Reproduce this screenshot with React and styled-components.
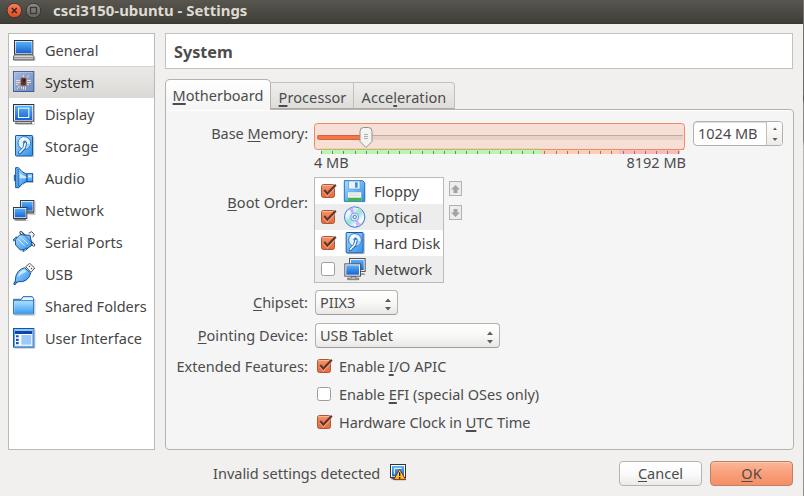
import React from 'react';
import styled, { createGlobalStyle, css } from 'styled-components';

const Global = createGlobalStyle`
  *, *::before, *::after { box-sizing: border-box; }
  body { margin: 0; background: #f1f0ee; }
`;

/* ---------- window frame ---------- */
const Desktop = styled.div`
  width: 804px;
  height: 496px;
  padding-right: 1px;
  overflow: hidden;
  background: linear-gradient(#77746e, #6b6a68 95px, #4c4b4a 98px, #8d8c8b 104px, #858483 140px, #b5b4b3 146px, #8f8e8d);
`;
const Window = styled.div`
  width: 803px;
  height: 496px;
  display: flex;
  flex-direction: column;
  background: #f1f0ee;
  color: #4c4c4c;
  font: 14.5px/20px "Noto Sans", "Open Sans", sans-serif;
  white-space: nowrap;
  user-select: none;
`;
const TitleBar = styled.header`
  flex: none;
  height: 24px;
  display: flex;
  align-items: flex-start;
  padding: 3px 0 0 6px;
  gap: 3px;
  background: linear-gradient(#58564e, #3e3d38);
  border-bottom: 1px solid #383733;
`;
const Title = styled.h1`
  margin: -3px 0 0 8px;
  color: #dfdbd2;
  font-size: 14.9px;
  font-weight: 700;
  line-height: 21px;
`;
const Main = styled.div`
  display: flex;
  gap: 10px;
  padding: 9px 9px 0 8px;
  height: 426px;
`;

/* ---------- sidebar ---------- */
const Sidebar = styled.nav`
  width: 147px;
  height: 417px;
  flex: none;
  background: #fff;
  border: 1px solid #bcbab8;
`;
const NavItem = styled.div`
  height: 32px;
  display: flex;
  align-items: center;
  padding-left: 4px;
  gap: 9px;
  color: ${p => (p.$active ? '#333' : '#454545')};
  ${p => p.$active && css`
    background: linear-gradient(#ebeae8, #dbd9d6);
    box-shadow: inset 0 1px #d6d4d2;
  `}
`;
const NavText = styled.span`
  letter-spacing: ${p => p.$s || 0}px;
`;

/* ---------- right column ---------- */
const Content = styled.section`
  flex: 1;
  display: flex;
  flex-direction: column;
`;
const Heading = styled.h2`
  flex: none;
  width: 628px;
  height: 36px;
  margin: 0 0 10px;
  padding: 0 0 0 8px;
  background: #fff;
  border: 1px solid #c4c2bf;
  font-size: 16.2px;
  line-height: 36px;
`;
const Tabs = styled.div`
  height: 30px;
  flex: none;
  display: flex;
  align-items: flex-end;
  position: relative;
  z-index: 1;
`;
const Tab = styled.div`
  width: ${p => p.$w}px;
  height: ${p => (p.$active ? 31 : 27)}px;
  margin-bottom: ${p => (p.$active ? -1 : 0)}px;
  padding: ${p => (p.$active ? '5px 0 0 6.6px' : '4px 0 0 7.6px')};
  letter-spacing: ${p => (p.$active ? 0 : 0.08)}px;
  border: 1px solid ${p => (p.$active ? '#b5b1ac' : '#c3c0bc')};
  border-bottom: ${p => (p.$active ? 0 : '1px solid #b0aca5')};
  border-left-width: ${p => (p.$joined ? 0 : 1)}px;
  border-radius: ${p => (p.$active ? '5px 5px 0 0' : p.$last ? '0 4px 0 0' : 0)};
  background: ${p => (p.$active ? 'linear-gradient(#fff, #f6f6f6 70%)' : 'linear-gradient(#efeeec, #dfdddb)')};
`;
const Pane = styled.div`
  flex: none;
  height: 341px;
  width: 629px;
  padding: 11px 0 0 2px;
  background: #f5f5f5;
  border: 1px solid #b5b1ac;
  border-radius: 0 4px 4px 4px;
  box-shadow: inset 0 1px #fff;
`;
const Field = styled.div`
  display: flex;
  align-items: flex-start;
  margin-bottom: ${p => p.$mb || 0}px;
`;
const FieldLabel = styled.div`
  width: 140px;
  margin-right: ${p => p.$gap || 6}px;
  padding-top: ${p => p.$pt || 0}px;
  text-align: right;
  letter-spacing: ${p => p.$s || 0}px;
`;
const Key = styled.span`
  text-decoration: underline ${p => (p.$bold ? 2 : 1)}px;
  text-underline-offset: 2.4px;
  text-decoration-skip-ink: none;
`;

/* ---------- memory slider ---------- */
const SliderBlock = styled.div`
  width: 372px;
  height: 56px;
`;
const SliderLabels = styled.div`
  display: flex;
  justify-content: space-between;
  margin-top: -3px;
`;
const SliderSvg = styled.svg`
  display: block;
  margin-top: 2px;
`;
const Spin = styled.div`
  width: 90px;
  height: 25px;
  margin-left: 7px;
  display: flex;
  border: 1px solid #b3b0ab;
  border-radius: 4px;
  background: #fff;
  box-shadow: inset 0 1px #dedddb;
`;
const SpinValue = styled.div`
  flex: 1;
  padding: 1px 0 0 4px;
  border-right: 1px solid #c2bfbb;
`;
const SpinButtons = styled.div`
  width: 15px;
  display: flex;
  flex-direction: column;
  align-items: center;
  justify-content: center;
  gap: 8px;
  background: linear-gradient(#fff, #ecebe9);
  border-radius: 0 3px 3px 0;
`;

/* ---------- boot order ---------- */
const BootList = styled.div`
  width: 130px;
  height: 106px;
  border: 1px solid #bcbab7;
  background: #fff;
`;
const BootRow = styled.div`
  height: 26px;
  display: flex;
  align-items: center;
  padding-left: 5px;
  color: #444;
  background: ${p => (p.$alt ? '#ededed' : '#fff')};
`;
const BootIcon = styled.div`
  width: 24px;
  height: 24px;
  margin: 0 7px 0 6px;
`;
const Arrows = styled.div`
  margin: 4px 0 0 5px;
  display: flex;
  flex-direction: column;
  gap: 9px;
`;
const ArrowButton = styled.div`
  width: 13px;
  height: 15px;
  display: grid;
  place-items: center;
  border: 1px solid #b1b1b1;
  background: #ececec;
`;

/* ---------- combo boxes, checkboxes, buttons ---------- */
const Combo = styled.div`
  width: ${p => p.$w}px;
  height: 25px;
  display: flex;
  justify-content: space-between;
  padding: 1px 6px 0 4px;
  border: 1px solid #b4b1ab;
  border-bottom-color: #9f9b94;
  border-radius: 4px;
  background: linear-gradient(#fff, #f8f8f7 50%, #e9e8e6);
`;
const ComboArrows = styled.div`
  display: flex;
  flex-direction: column;
  gap: 5px;
  padding-top: 6px;
`;
const Checks = styled.div`
  display: flex;
  flex-direction: column;
  gap: 8px;
`;
const Check = styled.div`
  display: flex;
  align-items: center;
  gap: 6px;
  height: 20px;
  letter-spacing: ${p => p.$s || 0}px;
`;
const Footer = styled.footer`
  display: flex;
  align-items: flex-start;
  padding: 11px 0 0 213px;
`;
const Status = styled.div`
  width: 406px;
  flex: none;
  display: flex;
  gap: 10px;
  padding-top: 2px;
`;
const StatusIcon = styled.div`
  padding-top: 1px;
  height: 18px;
`;
const Button = styled.button`
  width: 83px;
  height: 25px;
  flex: none;
  margin: 0 8px 0 0;
  padding: 0 0 1px;
  font: inherit;
  color: #4c4c4c;
  border: 1px solid ${p => (p.$primary ? '#bd8069' : '#b8b5b0')};
  border-radius: 4px;
  background: ${p => (p.$primary
    ? 'linear-gradient(#fcb799, #f9a17c 45%, #f58e65)'
    : 'linear-gradient(#fff, #fafafa 55%, #ebeae8)')};
  box-shadow: inset 0 1px ${p => (p.$primary ? '#fdc8b1' : '#fff')};
`;

/* ---------- drawings ---------- */
const HiddenSvg = styled.svg`
  display: block;
`;
const Defs = () => (
  <HiddenSvg width="0" height="0">
    <defs>
      <linearGradient id="blue" x1="0" y1="0" x2="0" y2="1">
        <stop offset="0" stopColor="#55b2fb" /><stop offset="1" stopColor="#1862d3" />
      </linearGradient>
      <linearGradient id="sky" x1="0" y1="0" x2="1" y2="1">
        <stop offset="0" stopColor="#a9dcff" /><stop offset="1" stopColor="#318fe9" />
      </linearGradient>
      <linearGradient id="base" x1="0" y1="0" x2="0" y2="1">
        <stop offset="0" stopColor="#fff" /><stop offset="1" stopColor="#a8a8a8" />
      </linearGradient>
      <linearGradient id="chip" x1="0" y1="0" x2="1" y2="1">
        <stop offset="0" stopColor="#a4badd" /><stop offset="1" stopColor="#6e89bd" />
      </linearGradient>
      <linearGradient id="folder" x1="0" y1="0" x2="0" y2="1">
        <stop offset="0" stopColor="#a9deff" /><stop offset="1" stopColor="#3a9bf0" />
      </linearGradient>
      <linearGradient id="orange" x1="0" y1="0" x2="0" y2="1">
        <stop offset="0" stopColor="#f79168" /><stop offset="1" stopColor="#e8683a" />
      </linearGradient>
      <linearGradient id="disc" x1="0" y1="0" x2="1" y2="1">
        <stop offset="0" stopColor="#b9d9ff" /><stop offset=".25" stopColor="#f4f8ff" />
        <stop offset=".5" stopColor="#9fd4f8" /><stop offset=".75" stopColor="#fff" /><stop offset="1" stopColor="#aebcf5" />
      </linearGradient>
      <linearGradient id="close" x1="0" y1="0" x2="0" y2="1">
        <stop offset="0" stopColor="#f58159" /><stop offset="1" stopColor="#dd4a1e" />
      </linearGradient>
      <linearGradient id="grey" x1="0" y1="0" x2="0" y2="1">
        <stop offset="0" stopColor="#8d8b83" /><stop offset="1" stopColor="#65635c" />
      </linearGradient>
      <linearGradient id="warn" x1="0" y1="0" x2="0" y2="1">
        <stop offset="0" stopColor="#fff48a" /><stop offset="1" stopColor="#f5a60a" />
      </linearGradient>
    </defs>
  </HiddenSvg>
);

const Icon22 = ({ children }) => <svg width="23" height="22" viewBox="0 0 69 66">{children}</svg>;

const HardDisk = () => (
  <g>
    <path d="M10 65h52V5" fill="none" stroke="#000" strokeOpacity=".25" strokeWidth="3" />
    <rect x="7.5" y="1.5" width="51" height="61" rx="2" fill="url(#sky)" stroke="#1259a8" strokeWidth="3" />
    <circle cx="34" cy="24" r="19" fill="#e4f3ff" stroke="#1c67b8" strokeWidth="2.5" />
    <path d="M34 24 21 12a18 18 0 0 1 12-5z" fill="#fff" />
    <path d="M34 24 51 28a18 18 0 0 1-9 11z" fill="#9fcdf6" />
    <circle cx="35" cy="22" r="4.5" fill="#6fb6f2" stroke="#2a72bd" strokeWidth="2" />
    <path d="M37 24 33 40 20 53" fill="none" stroke="#1c5fae" strokeWidth="10" strokeLinecap="round" strokeLinejoin="round" />
    <path d="M37 25 33 39 20 52" fill="none" stroke="#f4faff" strokeWidth="5" strokeLinecap="round" strokeLinejoin="round" />
  </g>
);

const icons = {
  general: (
    <g>
      <path d="M8 66h58V52" fill="none" stroke="#000" strokeOpacity=".25" strokeWidth="2" />
      <rect x="4.5" y="4.5" width="55" height="41" fill="#fff" stroke="#333" strokeWidth="3" />
      <rect x="8" y="8" width="48" height="34" fill="url(#blue)" />
      <path d="M4 48h56l3 6v9H1v-9z" fill="url(#base)" stroke="#444" strokeWidth="2.5" />
      <path d="M2 55h60" stroke="#666" strokeWidth="2" />
    </g>
  ),
  system: (
    <g>
      <rect x="1.5" y="1.5" width="61" height="60" fill="url(#chip)" stroke="#3c5b98" strokeWidth="3" />
      <path d="M4 59V4h55" fill="none" stroke="#c3d2ec" strokeWidth="2" />
      <rect x="24" y="21" width="15" height="22" fill="#5d3121" stroke="#8f5d48" strokeWidth="2" />
      <rect x="31" y="24" width="6" height="8" fill="#3a1c14" />
      <path d="M9 28.500h12M9 34.500h12M42 28.500h12M42 34.500h12M9 40.500h6M42 40.500h6M31.500 12v6M31.500 47v9M37.500 47v9M25.500 47v6M49 12l-8 9M12 54l8-9" stroke="#f9d6c6" strokeWidth="3" />
    </g>
  ),
  display: (
    <g>
      <path d="M12 65h52V56" fill="none" stroke="#000" strokeOpacity=".25" strokeWidth="2" />
      <rect x="1.5" y="4.5" width="61" height="50" fill="#fff" stroke="#333" strokeWidth="3" />
      <rect x="6" y="8" width="52" height="43" fill="url(#blue)" />
      <rect x="16.5" y="15.5" width="31" height="28" fill="none" stroke="#fff" strokeWidth="3" />
      <path d="M10 56h44l3 6H7z" fill="#ddd" stroke="#444" strokeWidth="2.5" />
    </g>
  ),
  storage: <HardDisk />,
  audio: (
    <g>
      <path d="M15 64 40 46h19l3-2" fill="none" stroke="#000" strokeOpacity=".22" strokeWidth="3" />
      <path d="M8 24H4v17h4z" fill="#4aa3ef" stroke="#124f98" strokeWidth="2.5" />
      <path d="M8 2h8Q27 17 42 22v21Q27 48 16 62H8z" fill="url(#sky)" stroke="#124f98" strokeWidth="3" strokeLinejoin="round" />
      <path d="M17 6v53" stroke="#124f98" strokeWidth="2" />
      <path d="M10 4h5v56h-5z" fill="#4b9fea" />
      <rect x="42" y="20" width="17" height="24" fill="url(#folder)" stroke="#124f98" strokeWidth="3" />
      <path d="M20 17Q29 27 40 29v5H20z" fill="#c9eaff" />
      <path d="M45 26h11v5H45z" fill="#c9eaff" />
    </g>
  ),
  network: (
    <g>
      <path d="M8 65h38M46 47h20V8" fill="none" stroke="#000" strokeOpacity=".22" strokeWidth="3" />
      <path d="M26 39h34l3 4H24z" fill="#ccc" stroke="#444" strokeWidth="2" />
      <rect x="22.500" y="4.500" width="40" height="34" fill="#fff" stroke="#3a3a3a" strokeWidth="3" />
      <rect x="26" y="8" width="33" height="27" fill="url(#blue)" />
      <rect x="1.5" y="25.500" width="40" height="33" fill="#fff" stroke="#3a3a3a" strokeWidth="3" />
      <rect x="5" y="29" width="33" height="26" fill="url(#blue)" />
      <path d="M7 60h29l2 3H5z" fill="#ddd" stroke="#444" strokeWidth="2" />
    </g>
  ),
  serial: (
    <g strokeLinejoin="round" strokeLinecap="round">
      <path d="M24 5 62 42" stroke="#333" strokeWidth="9" />
      <path d="M24 5 62 42" stroke="#fff" strokeWidth="4" />
      <path d="M48 6 56 2 64 10 60 18" fill="#eee" stroke="#333" strokeWidth="2.5" />
      <path d="M22 11 51 13 57 42 40 55 22 57 8 42 7 27z" fill="url(#sky)" stroke="#124f98" strokeWidth="3" />
      <path d="M23 18 44 38M17 26 34 44" stroke="#d6efff" strokeWidth="3" />
      <path d="M2 28 10 20M31 60 40 53" stroke="#124f98" strokeWidth="6" />
      <path d="M3 28 10 21M32 60 39 54" stroke="#a8dbff" strokeWidth="2.5" />
      <path d="M28 6 58 36" stroke="#124f98" strokeWidth="2" />
    </g>
  ),
  usb: (
    <g strokeLinejoin="round">
      <path d="M38 11 50 1 65 15 54 28z" fill="#fff" stroke="#333" strokeWidth="2.5" />
      <path d="M48 9h3v3h-3zM54 15h3v3h-3z" fill="#444" stroke="#444" />
      <path d="M5 62 10 55" stroke="#124f98" strokeWidth="8" strokeLinecap="round" />
      <path d="M5 62 10 55" stroke="#69baf8" strokeWidth="3" strokeLinecap="round" />
      <path d="M35 14 53 30Q51 42 40 51 30 58 17 56L9 59 7 52Q7 36 16 25 24 17 35 14z" fill="url(#sky)" stroke="#124f98" strokeWidth="3" />
      <path d="M14 42Q18 26 34 19L41 26Q24 32 14 42z" fill="#c5e8ff" />
    </g>
  ),
  folders: (
    <g>
      <path d="M6 61h60V12" fill="none" stroke="#000" strokeOpacity=".22" strokeWidth="2.500" />
      <path d="M2 57V13h23l5-8h28l4 6v46z" fill="#e5f5ff" stroke="#1b62ad" strokeWidth="3" />
      <rect x="4" y="19" width="56" height="37" fill="url(#folder)" />
      <path d="M2 17h60" stroke="#2b7fce" strokeWidth="3" />
    </g>
  ),
  ui: (
    <g>
      <path d="M5 64h61V8" fill="none" stroke="#000" strokeOpacity=".22" strokeWidth="2.500" />
      <rect x="1.500" y="4.500" width="61" height="56" fill="#fff" stroke="#1255a8" strokeWidth="3" />
      <rect x="3" y="6" width="58" height="6" fill="#8fc6fa" />
      <path d="M6 12h52v9H6z" fill="#0f45ab" />
      <path d="M9 25h8v6H9zM9 35h8v7H9zM9 45h8v7H9z" fill="#1c4fb0" />
      <rect x="25" y="24" width="30" height="29" fill="#9cc9fb" />
      <path d="M4.500 9v49h55V9" fill="none" stroke="#56a5ee" strokeWidth="3" />
    </g>
  ),
};

/* boot-list drawings use a 72-unit square, three units to the pixel */
const bootIcons = {
  floppy: (
    <g>
      <path d="M9 69h57V12" fill="none" stroke="#000" strokeOpacity=".2" strokeWidth="2" />
      <path d="M4 5h55l6 6v56H4z" fill="url(#sky)" stroke="#2472c4" strokeWidth="3" strokeLinejoin="round" />
      <rect x="17" y="6" width="34" height="24" fill="#e7f2fc" stroke="#5b9bdc" strokeWidth="2" />
      <rect x="36" y="10" width="8" height="16" fill="#3f8fe0" />
      <rect x="14" y="39" width="41" height="27" fill="#f8f8f8" stroke="#6da4dc" strokeWidth="1.500" />
      <path d="M14 56h41v10H14z" fill="#43b549" />
      <path d="M18 45h32M18 50h32" stroke="#ccc" strokeWidth="2" />
    </g>
  ),
  optical: (
    <g>
      <circle cx="36" cy="38" r="31" fill="#000" fillOpacity=".18" />
      <circle cx="35" cy="36" r="30.500" fill="url(#disc)" stroke="#3c83cf" strokeWidth="3" />
      <path d="M35 36 17 12A30 30 0 0 1 30 7z" fill="#c6b2f7" />
      <path d="M35 36 48 10A29 29 0 0 1 57 17z" fill="#a5efb1" />
      <path d="M35 36 9 46A29 29 0 0 0 16 57z" fill="#9aedc7" />
      <path d="M35 36 40 64A29 29 0 0 0 53 57z" fill="#d5b5fa" />
      <circle cx="35" cy="36" r="12" fill="#dceaff" stroke="#5b9be0" strokeWidth="2.500" />
      <circle cx="35" cy="36" r="5" fill="#fff" stroke="#3677c4" strokeWidth="3" />
    </g>
  ),
  disk: <g transform="translate(2 3)"><HardDisk /></g>,
  network: (
    <g>
      <path d="M31 49h33l3 5H31z" fill="#999" />
      <rect x="19.500" y="4.500" width="47" height="39" fill="#eee" stroke="#555" strokeWidth="3" />
      <rect x="24" y="9" width="38" height="30" fill="url(#blue)" />
      <path d="M26 57h11v6h10v5H14v-5h12z" fill="#bbb" stroke="#555" strokeWidth="2" />
      <rect x="5.500" y="20.500" width="47" height="37" fill="#f4f4f4" stroke="#555" strokeWidth="3" />
      <rect x="10" y="25" width="38" height="28" fill="url(#blue)" />
    </g>
  ),
};

const CheckBox = ({ on }) => (
  <svg width="17" height="17" viewBox="0 0 17 17">
    <rect x="1.500" y="1.500" width="13" height="13" rx="2" fill={on ? 'url(#orange)' : '#fff'} stroke={on ? '#a8583a' : '#a09d98'} />
    {on && <path d="M2.500 2.500h11" stroke="#fbb597" />}
    {on && <path d="M4.300 7.600 7.300 11.200 15.800 2" fill="none" stroke="#fbc0a5" strokeWidth="2.600" transform="translate(0 .9)" opacity=".6" />}
    {on && <path d="M4.300 7 7.300 10.600 15.800 1.800" fill="none" stroke="#5b3a2e" strokeWidth="2.100" />}
  </svg>
);

const Triangle = ({ up }) => (
  <svg width="6" height="4" viewBox="0 0 6 4"><path d={up ? 'M0 4h6L3 .5z' : 'M0 0h6L3 3.500z'} fill="#5c5c5c" /></svg>
);
const SmallTriangle = ({ up }) => (
  <svg width="6" height="3" viewBox="0 0 6 3"><path d={up ? 'M1 3h4L3 .5z' : 'M.5 0h5L3 3z'} fill="#5c5c5c" /></svg>
);

const MemorySlider = () => (
  <SliderSvg width="372" height="32" viewBox="0 0 372 32">
    <rect x=".5" y=".5" width="370" height="26" rx="3" fill="#f5dfd7" stroke="#ee8b61" />
    <rect x="7" y="26" width="220" height="5" fill="#b8f6b2" />
    <rect x="227" y="26" width="78" height="5" fill="#fbceb5" />
    <rect x="305" y="26" width="61" height="5" fill="#f8babb" />
    <path d="M7 25.500h220" stroke="#d3dfb8" />
    <path d="M7 26.500h220" stroke="#dba868" />
    <path d="M227 26.500h143" stroke="#ee8b61" />
    {Array.from({ length: 33 }, (_, i) => (
      <rect key={i} x={Math.round(7 + i * 11.17)} y="28" width="1" height="3" fill="#77807a" />
    ))}
    <rect x="3" y="13" width="366" height="4" fill="#e8d0c4" />
    <path d="M3 12.500h366" stroke="#c0aa9f" />
    <rect x="3.500" y="12.500" width="50" height="4" rx="2" fill="#f07746" stroke="#d65f33" />
    <path d="M49.500 4.500h5q3.500 0 3.500 4v10L52 24.500 46 18.500v-10q0-4 3.500-4z" fill="#f3f3f2" stroke="#94918d" />
    <path d="M50 11.500h4M50 13.500h4M50 15.500h4" stroke="#b0aeab" />
  </SliderSvg>
);

const WarningIcon = () => (
  <svg width="18" height="18" viewBox="0 0 54 54">
    <rect x="1.500" y="1.500" width="45" height="39" fill="#fff" stroke="#333" strokeWidth="3" />
    <rect x="6" y="6" width="36" height="31" fill="url(#blue)" />
    <path d="M13 31V13h22" fill="none" stroke="#fff" strokeWidth="3" />
    <path d="M4 44h12" stroke="#666" strokeWidth="4" />
    <path d="M29 16 47 47H11z" fill="url(#warn)" stroke="#8a2a0c" strokeWidth="3" strokeLinejoin="round" />
    <path d="M29 25v11M29 39v5" stroke="#111" strokeWidth="4" />
  </svg>
);

const nav = [
  ['general', 'General', 0],
  ['system', 'System', 0],
  ['display', 'Display', 0],
  ['storage', 'Storage', 0.1],
  ['audio', 'Audio', 0.1],
  ['network', 'Network', 0.12],
  ['serial', 'Serial Ports', 0.05],
  ['usb', 'USB', 0],
  ['folders', 'Shared Folders', 0],
  ['ui', 'User Interface', 0],
];
const boot = [
  ['floppy', 'Floppy', true],
  ['optical', 'Optical', true],
  ['disk', 'Hard Disk', true],
  ['network', 'Network', false],
];

export default function App() {
  return (
    <>
      <Global />
      <Defs />
      <Desktop>
        <Window>
          <TitleBar>
            <svg width="16" height="16" viewBox="0 0 16 16">
              <circle cx="8.300" cy="7.500" r="7.300" fill="url(#close)" stroke="#35332f" />
              <path d="M5.800 5 10.800 10M10.800 5 5.800 10" stroke="#3c2a22" strokeWidth="1.700" />
            </svg>
            <svg width="17" height="16" viewBox="0 0 17 16">
              <circle cx="8.500" cy="7.500" r="7.300" fill="url(#grey)" stroke="#35332f" />
              <rect x="5.500" y="4.500" width="6" height="6" fill="none" stroke="#3a3834" strokeWidth="1.300" />
            </svg>
            <Title>csci3150-ubuntu - Settings</Title>
          </TitleBar>
          <Main>
            <Sidebar>
              {nav.map(([id, text, s]) => (
                <NavItem key={id} $active={id === 'system'}>
                  <Icon22>{icons[id]}</Icon22>
                  <NavText $s={s}>{text}</NavText>
                </NavItem>
              ))}
            </Sidebar>
            <Content>
              <Heading>System</Heading>
              <Tabs>
                <Tab $w={106} $active><Key $bold>M</Key>otherboard</Tab>
                <Tab $w={83} $joined><Key $bold>P</Key>rocessor</Tab>
                <Tab $w={101} $joined $last>Acce<Key $bold>l</Key>eration</Tab>
              </Tabs>
              <Pane>
                <Field>
                  <FieldLabel $pt={2} $s={-0.05}>Base <Key>M</Key>emory:</FieldLabel>
                  <SliderBlock>
                    <MemorySlider />
                    <SliderLabels><span>4 MB</span><span>8192 MB</span></SliderLabels>
                  </SliderBlock>
                  <Spin>
                    <SpinValue>1024 MB</SpinValue>
                    <SpinButtons><SmallTriangle up /><SmallTriangle /></SpinButtons>
                  </Spin>
                </Field>
                <Field $mb={7}>
                  <FieldLabel $pt={15} $s={0.06}><Key>B</Key>oot Order:</FieldLabel>
                  <BootList>
                    {boot.map(([id, text, on], i) => (
                      <BootRow key={id} $alt={i % 2 === 1}>
                        <CheckBox on={on} />
                        <BootIcon><svg width="24" height="24" viewBox="0 0 72 72">{bootIcons[id]}</svg></BootIcon>
                        {text}
                      </BootRow>
                    ))}
                  </BootList>
                  <Arrows>
                    <ArrowButton><svg width="9" height="10" viewBox="0 0 9 10"><path d="M4.500 1 9 5.500H6.500V9h-4V5.500H0z" fill="#a3a3a3" /></svg></ArrowButton>
                    <ArrowButton><svg width="9" height="10" viewBox="0 0 9 10"><path d="M4.500 9 9 4.500H6.500V1h-4v3.500H0z" fill="#a3a3a3" /></svg></ArrowButton>
                  </Arrows>
                </Field>
                <Field $mb={8}>
                  <FieldLabel $pt={2} $gap={7}><Key>C</Key>hipset:</FieldLabel>
                  <Combo $w={83}>PIIX3<ComboArrows><Triangle up /><Triangle /></ComboArrows></Combo>
                </Field>
                <Field $mb={8}>
                  <FieldLabel $pt={2} $gap={7} $s={0.05}><Key>P</Key>ointing Device:</FieldLabel>
                  <Combo $w={185}>USB Tablet<ComboArrows><Triangle up /><Triangle /></ComboArrows></Combo>
                </Field>
                <Field>
                  <FieldLabel $gap={8} $s={0.05}>Extended Features:</FieldLabel>
                  <Checks>
                    <Check><CheckBox on /><span>Enable <Key $bold>I</Key>/O APIC</span></Check>
                    <Check><CheckBox /><span>Enable <Key $bold>E</Key>FI (special OSes only)</span></Check>
                    <Check $s={-0.03}><CheckBox on /><span>Hardware Clock in <Key $bold>U</Key>TC Time</span></Check>
                  </Checks>
                </Field>
              </Pane>
            </Content>
          </Main>
          <Footer>
            <Status>
              Invalid settings detected
              <StatusIcon><WarningIcon /></StatusIcon>
            </Status>
            <Button><Key>C</Key>ancel</Button>
            <Button $primary><Key>O</Key>K</Button>
          </Footer>
        </Window>
      </Desktop>
    </>
  );
}
